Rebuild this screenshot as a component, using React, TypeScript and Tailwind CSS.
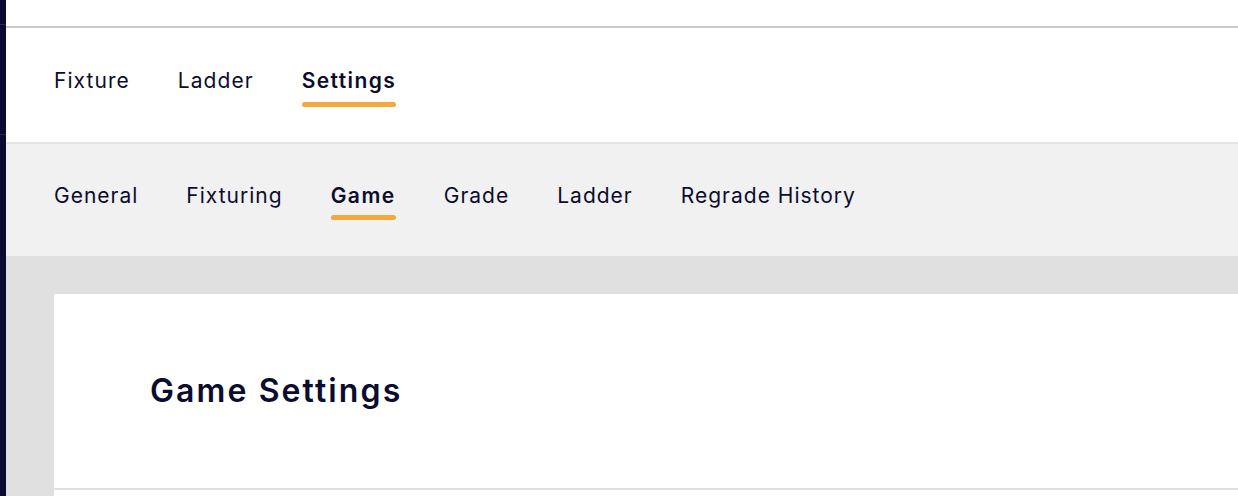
import React from "react";

export default function App() {
  const main = ["Fixture", "Ladder", "Settings"];
  const sub = ["General", "Fixturing", "Game", "Grade", "Ladder", "Regrade History"];
  return (
    <div className="flex h-[496px] w-[1238px] overflow-hidden bg-white text-[#0c0c2e] font-['Inter','Noto_Sans',sans-serif]">
      <div className="flex w-[6px] shrink-0 flex-col bg-[#0b0b30]">
        <div className="h-[24px]" />
        <div className="h-[1px] bg-[#2a2a4c]" />
        <div className="h-[109px]" />
        <div className="h-[1px] bg-[#2a2a4c]" />
      </div>
      <div className="flex min-w-0 flex-1 flex-col">
        <div className="h-[26px] shrink-0 bg-white" />
        <div className="h-[2px] shrink-0 bg-[#cccccc]" />
        <nav className="flex h-[114px] shrink-0 items-center gap-[48px] bg-white pl-[48px] pt-[5px]">
          {main.map((t) => {
            const active = t === "Settings";
            return (
              <div key={t} className="relative flex flex-col items-stretch">
                <span className={`text-[21px] leading-[24px] ${active ? "font-semibold tracking-[1.4px]" : "font-normal tracking-[1.05px]"}`}>{t}</span>
                <span className={`mt-[9px] h-[5px] w-full rounded-full ${active ? "bg-[#f4aa3b]" : "bg-transparent"}`} />
              </div>
            );
          })}
        </nav>
        <div className="h-[2px] shrink-0 bg-[#e4e4e4]" />
        <nav className="flex h-[112px] shrink-0 items-center gap-[48px] bg-[#f1f1f1] pl-[48px] pt-[4px]">
          {sub.map((t) => {
            const active = t === "Game";
            return (
              <div key={t} className="relative flex flex-col items-stretch">
                <span className={`text-[21px] leading-[24px] ${active ? "font-semibold tracking-[1.5px]" : "font-normal tracking-[1px]"}`}>{t}</span>
                <span className={`mt-[7px] h-[5px] w-full rounded-full ${active ? "bg-[#f4aa3b]" : "bg-transparent"}`} />
              </div>
            );
          })}
        </nav>
        <div className="flex-1 bg-[#e0e0e0] pl-[48px] pt-[38px]">
          <div className="bg-white">
            <div className="flex h-[194px] items-center pl-[96px]">
              <h1 className="text-[32px] font-semibold tracking-[2.1px]">Game Settings</h1>
            </div>
            <div className="h-[2px] bg-[#e0e0e0]" />
            <div className="h-[40px]" />
          </div>
        </div>
      </div>
    </div>
  );
}
